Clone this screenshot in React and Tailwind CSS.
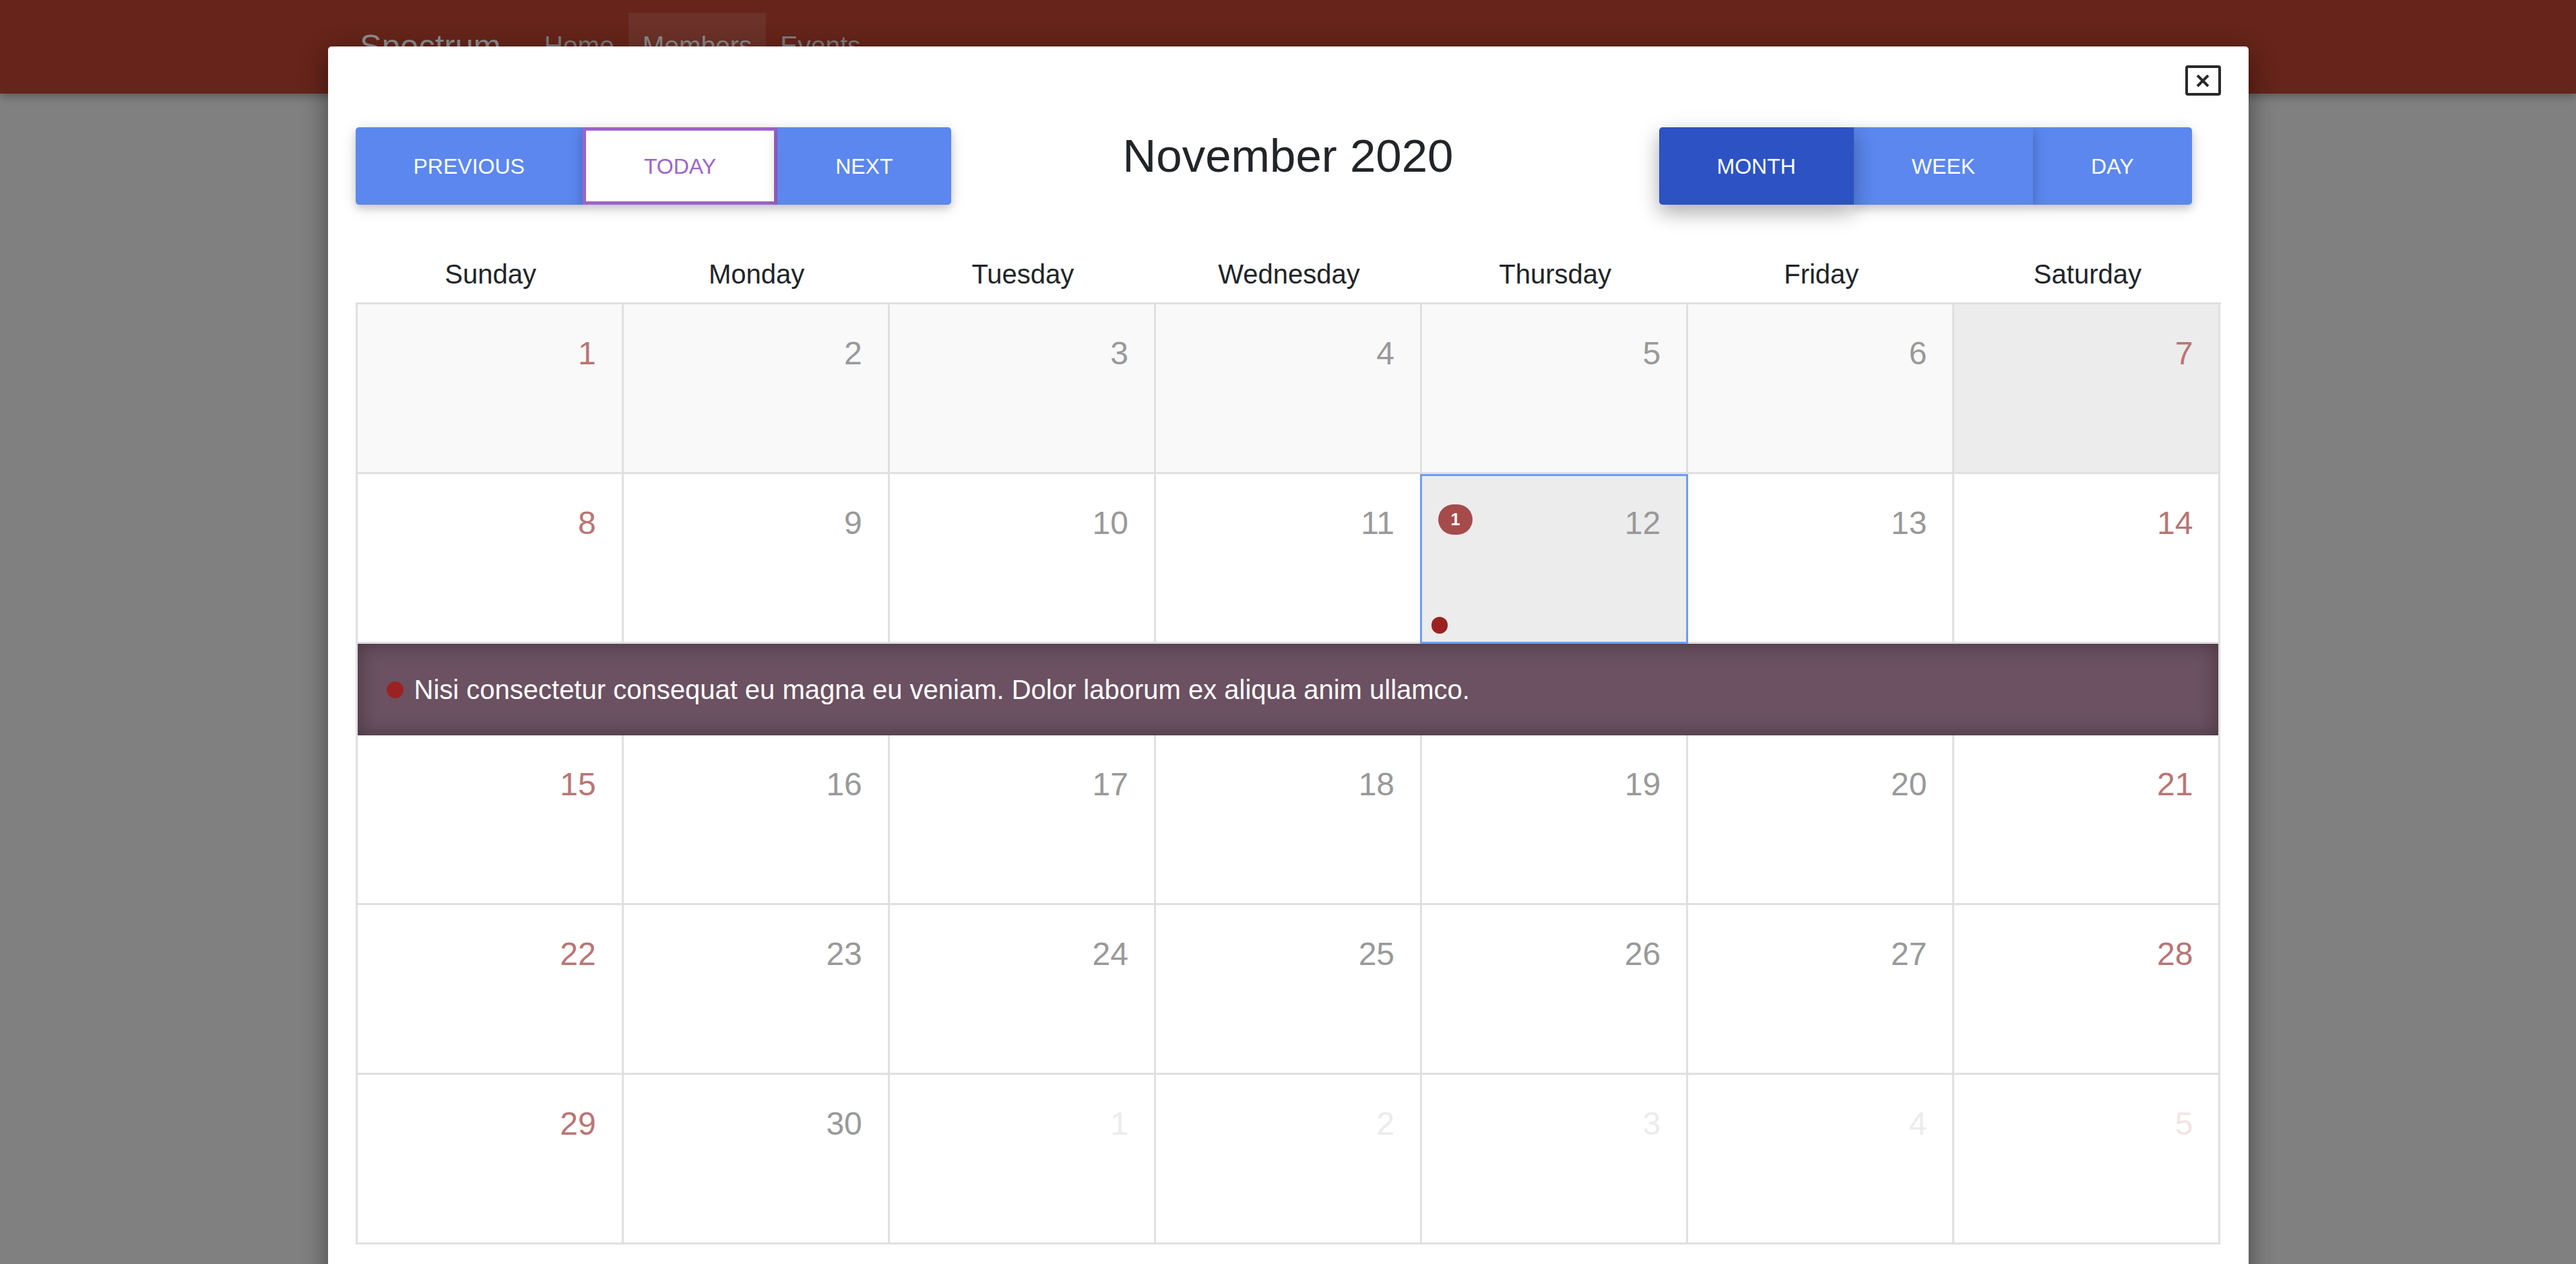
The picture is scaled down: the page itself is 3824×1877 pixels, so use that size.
import React from 'react';
import clsx from 'clsx';

const DAYS = ['Sunday', 'Monday', 'Tuesday', 'Wednesday', 'Thursday', 'Friday', 'Saturday'];

// one entry per week; muted = days of next month
const WEEKS = [
  { days: [1, 2, 3, 4, 5, 6, 7], bg: 'bg-[#f9f9f9]' },
  { days: [8, 9, 10, 11, 12, 13, 14], event: true },
  { days: [15, 16, 17, 18, 19, 20, 21] },
  { days: [22, 23, 24, 25, 26, 27, 28] },
  { days: [29, 30, 1, 2, 3, 4, 5], mutedFrom: 2 },
];

function numberColor(col, muted) {
  const weekend = col === 0 || col === 6;
  if (muted) return weekend ? 'text-[#f3e4e4]' : 'text-[#ececec]';
  return weekend ? 'text-[#b97575]' : 'text-[#999999]';
}

function DayCell({ day, col, muted, bg, selected }) {
  return (
    <div
      className={clsx(
        'relative h-[252px] border-r-[3px] border-b-[3px] border-[#e0e0e0] pr-[38px] pt-[49px] text-right text-[48px] leading-none',
        bg,
        numberColor(col, muted)
      )}
    >
      {selected && (
        <>
          <div className="pointer-events-none absolute -left-[3px] top-0 -right-[3px] -bottom-[3px] z-10 border-[3px] border-[#6f9cf5]" />
          <span className="absolute left-[24px] top-[45px] flex h-[45px] w-[51px] items-center justify-center rounded-full bg-[#a54b4b] text-[25px] font-bold leading-none text-white">
            1
          </span>
          <span className="absolute bottom-[12px] left-[14px] h-[25px] w-[24px] rounded-full bg-[#9b2222]" />
        </>
      )}
      {day}
    </div>
  );
}

function GroupButton({ children, className }) {
  return (
    <button
      className={clsx(
        'relative flex h-[115px] items-center px-[86px] text-[32px] uppercase leading-none',
        className
      )}
    >
      {children}
    </button>
  );
}

const shadowBtn = 'shadow-[0_5px_12px_rgba(0,0,0,0.16),0_5px_24px_rgba(0,0,0,0.12)]';

export default function App() {
  return (
    <div className="relative h-[1877px] w-full overflow-hidden bg-[#808080] font-['Liberation_Sans',Arial,sans-serif]">
      <header className="flex h-[139px] items-start bg-[#66241a] pl-[534px] shadow-[0_4px_12px_rgba(0,0,0,0.3)]">
        <span className="mr-[43px] mt-[40px] text-[49px] leading-[56px] text-[#8d8d8d]">Spectrum</span>
        <nav className="mt-[19px] flex text-[39px] leading-[45px]">
          <a className="px-[21px] pb-[30px] pt-[26px] text-[#7c7c7c]">Home</a>
          <a className="bg-[#6c3128] px-[21px] pb-[30px] pt-[26px] text-[#8a8a8a]">Members</a>
          <a className="px-[21px] pb-[30px] pt-[26px] text-[#7c7c7c]">Events</a>
        </nav>
      </header>

      <div className="absolute inset-x-0 top-[69px] flex justify-center">
        <div className="w-[2851px] rounded-t-[5px] bg-white px-[41px] pb-[80px] pt-[28px] shadow-[0_12px_40px_rgba(0,0,0,0.45)]">
          <div className="flex justify-end">
            <button className="flex h-[45px] w-[53px] items-center justify-center rounded-[4px] border-[4px] border-[#2a2a2a] bg-white">
              <svg width="20" height="18" viewBox="0 0 20 18">
                <path d="M2 1 L18 17 M18 1 L2 17" stroke="#2a2a2a" strokeWidth="4" />
              </svg>
            </button>
          </div>

          <div className="mt-[47px] grid grid-cols-3 items-start">
            <div className="flex justify-self-start">
              <GroupButton className={clsx('rounded-l-[5px] bg-[#5b87ee] text-white', shadowBtn)}>Previous</GroupButton>
              <GroupButton className={clsx('border-[5px] border-[#9c64cc] bg-white px-[83px] text-[#9c64cc]', shadowBtn)}>
                Today
              </GroupButton>
              <GroupButton className={clsx('rounded-r-[5px] bg-[#5b87ee] text-white', shadowBtn)}>Next</GroupButton>
            </div>
            <h2 className="mt-[3px] justify-self-center text-[69px] font-normal leading-[79px] text-[#212529]">
              November 2020
            </h2>
            <div className="mr-[43px] flex justify-self-end">
              <GroupButton className="z-30 rounded-l-[5px] bg-[#2c52c4] text-white shadow-[0_12px_27px_rgba(0,0,0,0.2),0_10px_37px_rgba(0,0,0,0.15)]">
                Month
              </GroupButton>
              <GroupButton className={clsx('z-20 px-[83px] bg-[#5b87ee] text-white', shadowBtn)}>Week</GroupButton>
              <GroupButton className={clsx('z-10 rounded-r-[5px] bg-[#5b87ee] text-white', shadowBtn)}>Day</GroupButton>
            </div>
          </div>

          <div className="mt-[80px] grid grid-cols-7 pb-[19px] pl-[3px] text-[40px] leading-[46px] text-[#212529]">
            {DAYS.map((d) => (
              <div key={d} className="text-center">
                {d}
              </div>
            ))}
          </div>

          <div className="grid grid-cols-7 border-l-[3px] border-t-[3px] border-[#e0e0e0]">
            {WEEKS.map((week, wi) => (
              <React.Fragment key={wi}>
                {week.days.map((day, col) => (
                  <DayCell
                    key={col}
                    day={day}
                    col={col}
                    muted={week.mutedFrom != null && col >= week.mutedFrom}
                    bg={wi === 0 && col === 6 ? 'bg-[#ececec]' : wi === 1 && col === 4 ? 'bg-[#ececec]' : week.bg}
                    selected={wi === 1 && col === 4}
                  />
                ))}
                {week.event && (
                  <div className="col-span-7 flex h-[136px] items-center border-r-[3px] border-[#e0e0e0] bg-[#6b5161] pl-[43px] text-[40px] leading-[46px] text-white shadow-[inset_0_0_30px_rgba(0,0,0,0.35)]">
                    <span className="mr-[16px] h-[25px] w-[25px] shrink-0 rounded-full bg-[#9b2222]" />
                    Nisi consectetur consequat eu magna eu veniam. Dolor laborum ex aliqua anim ullamco.
                  </div>
                )}
              </React.Fragment>
            ))}
          </div>
        </div>
      </div>
    </div>
  );
}
